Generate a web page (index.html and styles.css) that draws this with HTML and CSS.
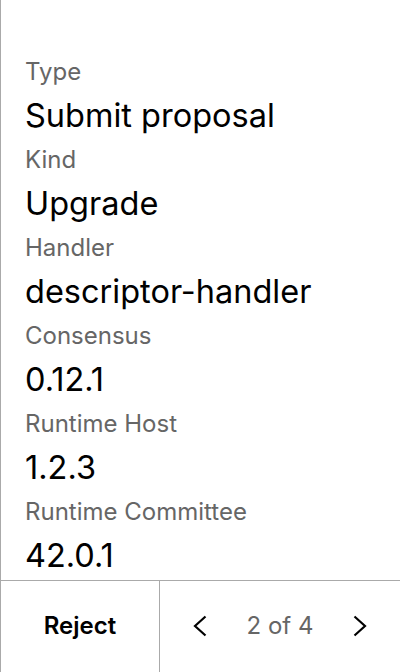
FILE: index.html
```html
<!DOCTYPE html>
<html>
<head>
<meta charset="utf-8">
<link rel="stylesheet" href="styles.css">
</head>
<body>
<div class="panel">
  <div class="content">
    <div class="field"><div class="label">Type</div><div class="value">Submit proposal</div></div>
    <div class="field"><div class="label">Kind</div><div class="value">Upgrade</div></div>
    <div class="field"><div class="label">Handler</div><div class="value">descriptor-handler</div></div>
    <div class="field"><div class="label">Consensus</div><div class="value">0.12.1</div></div>
    <div class="field"><div class="label">Runtime Host</div><div class="value">1.2.3</div></div>
    <div class="field"><div class="label">Runtime Committee</div><div class="value">42.0.1</div></div>
  </div>
  <div class="footer">
    <div class="reject">Reject</div>
    <div class="pager">
      <div class="nav"><svg width="16" height="22" viewBox="0 0 16 22"><path d="M13.5 1.5 L3 11 L13.5 20.5" fill="none" stroke="#000" stroke-width="2.2"/></svg></div>
      <div class="count">2 of 4</div>
      <div class="nav"><svg width="16" height="22" viewBox="0 0 16 22"><path d="M2.5 1.5 L13 11 L2.5 20.5" fill="none" stroke="#000" stroke-width="2.2"/></svg></div>
    </div>
  </div>
</div>
</body>
</html>
```
FILE: styles.css
```css
* { box-sizing: border-box; }
html, body { margin: 0; padding: 0; background: #fff; }
body { font-family: Inter, "Noto Sans", sans-serif; color: #000; }
.panel {
  width: 400px;
  height: 672px;
  border-left: 1px solid #aaa;
  display: flex;
  flex-direction: column;
}
.content {
  flex: 1 1 auto;
  min-height: 0;
  padding: 56px 0 0 24px;
}
.label {
  font-size: 24px;
  line-height: 32px;
  color: #666;
  margin-bottom: 8px;
}
.value {
  font-size: 32.5px;
  line-height: 40px;
  color: #000;
  margin-bottom: 8px;
}
.field:last-child .value { margin-bottom: 0; }
.footer {
  flex: 0 0 92px;
  height: 92px;
  border-top: 1px solid #aaa;
  display: flex;
}
.reject {
  width: 159px;
  border-right: 1px solid #aaa;
  display: flex;
  align-items: center;
  justify-content: center;
  font-size: 24px;
  font-weight: 600;
  padding-bottom: 2px;
}
.pager {
  flex: 1;
  display: grid;
  grid-template-columns: 1fr 1fr 1fr;
  align-items: center;
  padding-bottom: 2px;
}
.nav, .count {
  display: flex;
  justify-content: center;
  align-items: center;
}
.count {
  font-size: 24px;
  color: #666;
}
.nav svg { display: block; }
```
